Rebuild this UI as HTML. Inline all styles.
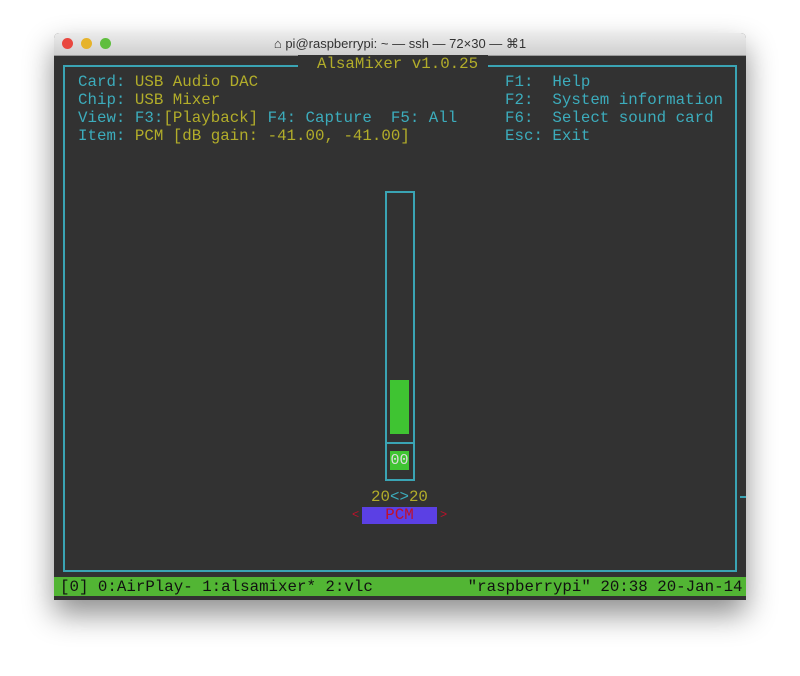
<!DOCTYPE html>
<html><head><meta charset="utf-8"><style>
body{margin:0;width:800px;height:676px;background:#fff;position:relative;overflow:hidden;font-family:"Liberation Mono",monospace}
.win{position:absolute;left:54px;top:33px;width:692px;height:567px;box-shadow:0 14px 30px rgba(0,0,0,.45);border-radius:5px 5px 0 0;background:#323232;overflow:hidden}
.tb{position:absolute;left:0;top:0;width:692px;height:22px;background:linear-gradient(#ebebeb,#cfcfcf);border-bottom:1px solid #999;font:13px "Liberation Sans",sans-serif;color:#333;text-align:center;line-height:22px}
.dot{position:absolute;top:5px;width:11px;height:11px;border-radius:50%}
.t{position:absolute;font-size:15.8px;line-height:18px;white-space:pre;color:#b2ad2a}
.c{color:#3cacbc}
.b{position:absolute;border:2px solid #3aa4b4}
</style></head><body>
<div class="win">
<div class="tb"><div class="dot" style="left:8px;background:#e9473f"></div><div class="dot" style="left:27px;background:#e6b32b"></div><div class="dot" style="left:46px;background:#5fbe3e"></div>⌂ pi@raspberrypi: ~ — ssh — 72×30 — ⌘1</div>
<div class="b" style="left:9px;top:32px;width:670px;height:503px"></div>
<div class="t" style="left:244px;top:22px;background:#323232">  AlsaMixer v1.0.25 </div>
<div class="t" style="left:24px;top:40px"><span class="c">Card:</span> USB Audio DAC
<span class="c">Chip:</span> USB Mixer
<span class="c">View:</span> <span class="c">F3:</span>[Playback] <span class="c">F4: Capture  F5: All</span>
<span class="c">Item:</span> PCM [dB gain: -41.00, -41.00]</div>
<div class="t c" style="left:451px;top:40px">F1:  Help
F2:  System information
F6:  Select sound card
Esc: Exit</div>
<div class="b" style="left:331px;top:158px;width:26px;height:286px"></div>
<div style="position:absolute;left:331px;top:409px;width:30px;height:2px;background:#3aa4b4"></div>
<div style="position:absolute;left:336px;top:347px;width:19px;height:54px;background:#3fc432"></div>
<div style="position:absolute;left:336px;top:418px;width:19px;height:19px;background:#3fc432;color:#ddd;font-size:15px;line-height:19px;text-align:center">00</div>
<div class="t" style="left:317px;top:455px">20<span class="c">&lt;&gt;</span>20</div>
<div style="position:absolute;left:308px;top:474px;width:75px;height:17px;background:#5b40e4;color:#c0102a;font-size:15.8px;line-height:17px;text-align:center">PCM</div>
<div class="t" style="left:298px;top:473px;color:#c0102a;font-size:12px">&lt;</div>
<div class="t" style="left:386px;top:473px;color:#c0102a;font-size:12px">&gt;</div>
<div style="position:absolute;left:686px;top:463px;width:6px;height:2px;background:#3aa4b4"></div>
<div style="position:absolute;left:0;top:544px;width:692px;height:19px;background:#52b534"></div>
<div class="t" style="left:6px;top:545px;color:#111">[0] 0:AirPlay- 1:alsamixer* 2:vlc          "raspberrypi" 20:38 20-Jan-14</div>
</div>
</body></html>
